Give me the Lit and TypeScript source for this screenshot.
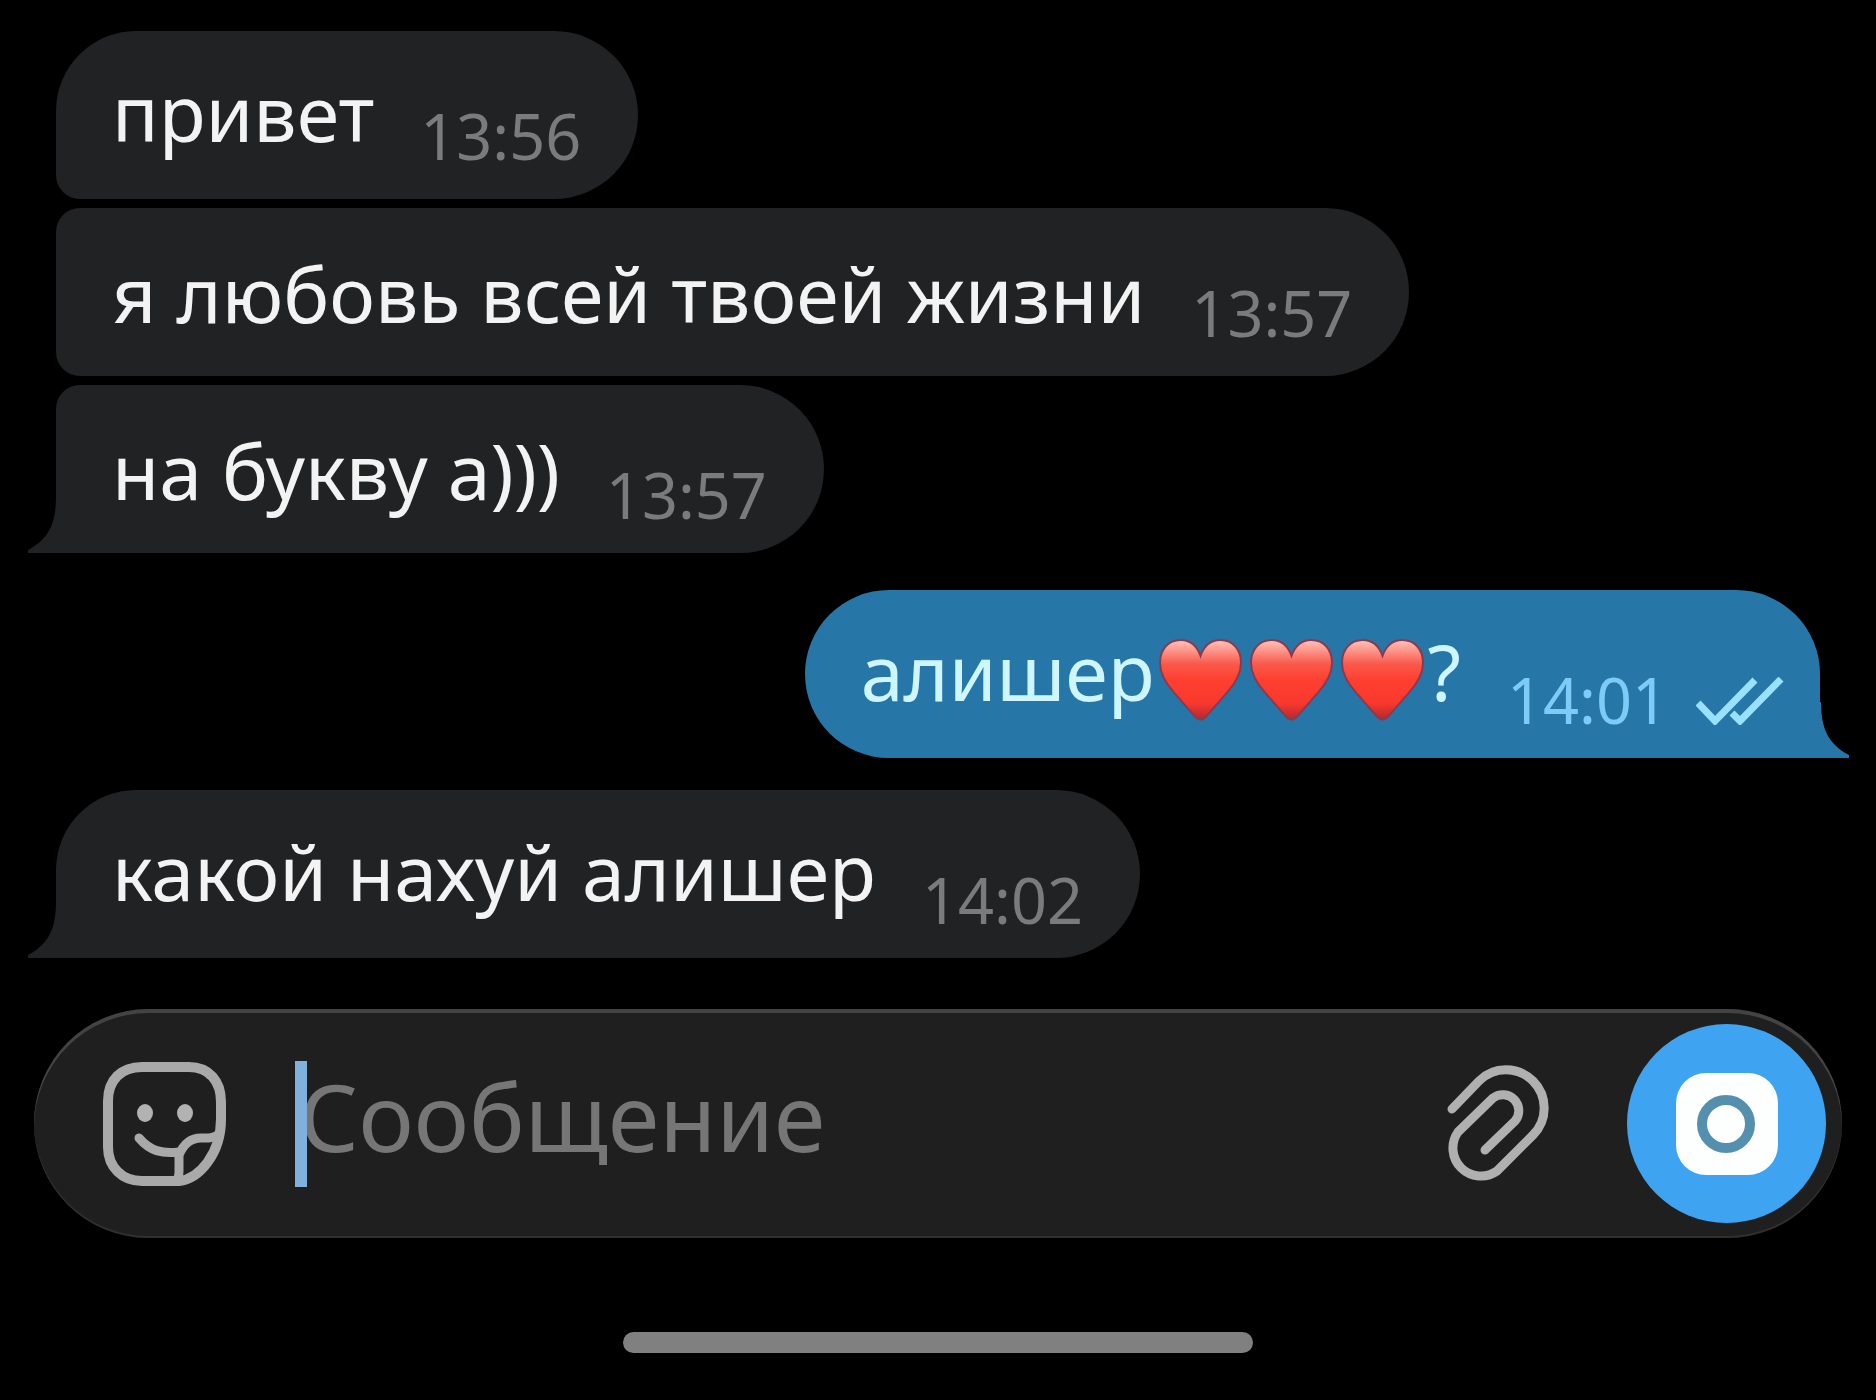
import { LitElement, html, css, nothing } from "lit";
import { customElement, property } from "lit/decorators.js";
import { classMap } from "lit/directives/class-map.js";

interface Message {
  text: string;
  hearts?: number;
  after?: string;
  time: string;
  own?: boolean;
  grouped?: boolean;
  tail?: boolean;
}

const MESSAGES: Message[] = [
  { text: "привет", time: "13:56" },
  { text: "я любовь всей твоей жизни", time: "13:57", grouped: true },
  { text: "на букву а)))", time: "13:57", grouped: true, tail: true },
  { text: "алишер", hearts: 3, after: "?", time: "14:01", own: true, tail: true },
  { text: "какой нахуй алишер", time: "14:02", tail: true },
];

const heart = (id: string) => html`
  <svg class="heart" viewBox="0 0 84 84" role="img" aria-label="❤️">
    <defs>
      <linearGradient id=${id} x1="0" y1="0" x2="0" y2="1">
        <stop offset="0" stop-color="#ffc4ba" />
        <stop offset="0.12" stop-color="#ff9a8e" />
        <stop offset="0.3" stop-color="#f9594b" />
        <stop offset="0.5" stop-color="#ff4030" />
        <stop offset="0.8" stop-color="#f8382c" />
        <stop offset="1" stop-color="#b02a30" />
      </linearGradient>
    </defs>
    <path
      d="M42 17C38 6 31 1 22 1C9 1 1 11 1 24C1 36 7 45 15 54L36 78Q42 85 48 78L69 54C77 45 83 36 83 24C83 11 75 1 62 1C53 1 46 6 42 17Z"
      fill=${`url(#${id})`}
      stroke="#8c3950"
      stroke-width="2"
    />
  </svg>
`;

@customElement("chat-message")
class ChatMessage extends LitElement {
  @property({ attribute: false }) message!: Message;

  static styles = css`
    :host {
      display: flex;
    }
    .bubble {
      position: relative;
      display: flex;
      gap: 46px;
      box-sizing: border-box;
      min-height: 168px;
      padding: 32px 57px 13px 56px;
      border-radius: 80px 84px 84px 24px;
      background: #212223;
      color: #f3f3f3;
    }
    .grouped {
      padding-top: 36px;
      border-top-left-radius: 24px;
    }
    .tailed {
      padding-bottom: 8px;
      border-bottom-left-radius: 0;
    }
    .own {
      margin-left: auto;
      padding-right: 36px;
      border-radius: 84px 84px 0 84px;
      background: #2676a8;
      color: #cdf6ff;
    }
    .text {
      display: flex;
      align-items: flex-start;
      margin: 0;
      font-size: 77px;
      line-height: 100px;
    }
    .meta {
      display: flex;
      align-items: flex-end;
      align-self: flex-end;
      gap: 28px;
      color: #7a7b7c;
      font-size: 63px;
      line-height: 100px;
    }
    .own .meta {
      color: #7fcbf7;
    }
    .heart {
      flex: none;
      width: 83px;
      height: 83px;
      margin: 17px 4px 0;
    }
    .checks {
      width: 88px;
      height: 48px;
      margin-bottom: 25px;
    }
    .tail {
      position: absolute;
      bottom: 0;
      left: -28px;
      width: 30px;
      height: 56px;
    }
    .own .tail {
      left: auto;
      right: -29px;
      transform: scaleX(-1);
    }
  `;

  render() {
    const m = this.message;
    const classes = { bubble: true, own: !!m.own, grouped: !!m.grouped, tailed: !!m.tail };
    return html`
      <div class=${classMap(classes)}>
        <p class="text">
          <span>${m.text}</span>
          ${Array.from({ length: m.hearts ?? 0 }, (_, i) => heart(`heart-${i}`))}
          ${m.after ? html`<span>${m.after}</span>` : nothing}
        </p>
        <div class="meta">
          <time>${m.time}</time>
          ${m.own
            ? html`<svg class="checks" viewBox="0 0 88 48" role="img" aria-label="Прочитано">
                <g fill="none" stroke="#98e1ff" stroke-width="7">
                  <path d="M2 26L19 44L59 3" />
                  <path d="M36 36L44 44L85 2" />
                </g>
              </svg>`
            : nothing}
        </div>
        ${m.tail
          ? html`<svg class="tail" viewBox="0 0 30 56" aria-hidden="true">
              <path
                d="M30 0H28C28 26 21 42 0 53V56H30Z"
                fill=${m.own ? "#2676a8" : "#212223"}
              />
            </svg>`
          : nothing}
      </div>
    `;
  }
}

@customElement("message-composer")
class MessageComposer extends LitElement {
  static styles = css`
    :host {
      display: block;
    }
    .bar {
      display: flex;
      align-items: center;
      box-sizing: border-box;
      min-height: 229px;
      padding: 0 16px 0 68px;
      border-radius: 115px;
      background: #1f1f1f;
      box-shadow: inset 0 4px 0 #434343, inset 0 -2px 0 #303030;
    }
    button {
      display: flex;
      align-items: center;
      justify-content: center;
      flex: none;
      padding: 0;
      border: 0;
      background: none;
      cursor: pointer;
    }
    svg {
      overflow: visible;
    }
    .sticker svg {
      width: 125px;
      height: 126px;
    }
    .clip svg {
      width: 104px;
      height: 120px;
    }
    .camera {
      width: 199px;
      height: 199px;
      margin-left: 78px;
      border-radius: 50%;
      background: #3ea3f0;
    }
    .camera svg {
      width: 104px;
      height: 104px;
    }
    .field {
      display: flex;
      align-items: center;
      flex: 1;
      min-width: 0;
      margin-left: 68px;
    }
    .caret {
      z-index: 1;
      flex: none;
      width: 12px;
      height: 126px;
      background: #7fb1dc;
    }
    input {
      flex: 1;
      min-width: 0;
      height: 126px;
      box-sizing: border-box;
      margin: 0 0 0 -8px;
      padding: 0 0 16px;
      border: 0;
      outline: 0;
      background: none;
      color: #f3f3f3;
      caret-color: transparent;
      font-family: inherit;
      font-size: 93px;
    }
    input::placeholder {
      color: #767676;
      opacity: 1;
    }
  `;

  render() {
    return html`
      <form class="bar">
        <button class="sticker" type="button" aria-label="Стикеры">
          <svg viewBox="0 0 125 126" fill="none" stroke="#a9a9a9" stroke-linecap="round">
            <path
              d="M77 120H40C20 120 6 106 6 86V40C6 19 19 6 40 6H87C107 6 119 20 119 41V58C119 93 97 118 77 120Z"
              stroke-width="10"
              stroke-linejoin="round"
            />
            <path d="M74 119Q77 117 77 110V94Q84 77 99 77H107Q115 76 118 71" stroke-width="9" />
            <path d="M37 77C48 90 60 93 77 91" stroke-width="9" />
            <ellipse cx="43" cy="52" rx="8" ry="9" fill="#b2b2b2" stroke="none" />
            <ellipse cx="83" cy="52" rx="8" ry="9" fill="#b2b2b2" stroke="none" />
          </svg>
        </button>
        <div class="field">
          <span class="caret"></span>
          <input type="text" placeholder="Сообщение" aria-label="Сообщение" />
        </div>
        <button class="clip" type="button" aria-label="Прикрепить">
          <svg viewBox="0 0 104 120" fill="none" stroke="#b0b0b0" stroke-width="9" stroke-linecap="round">
            <path
              d="M7 45L34 17A38 38 0 0 1 88 71L52 107A28 28 0 0 1 13 68L48 34A16 16 0 0 1 70 57L40 86"
            />
          </svg>
        </button>
        <button class="camera" type="button" aria-label="Видеосообщение">
          <svg viewBox="0 0 104 104">
            <rect x="1" y="1" width="102" height="102" rx="30" fill="#fdffff" />
            <circle cx="51" cy="52" r="24" fill="none" stroke="#558fae" stroke-width="10" />
          </svg>
        </button>
      </form>
    `;
  }
}

@customElement("app-root")
class AppRoot extends LitElement {
  static styles = css`
    :host {
      display: flex;
      flex-direction: column;
      box-sizing: border-box;
      min-height: 100vh;
      padding-top: 31px;
      background: #000;
      font-family: "Noto Sans", sans-serif;
    }
    .messages {
      display: flex;
      flex-direction: column;
      gap: 32px;
      padding: 0 56px;
    }
    .group {
      display: flex;
      flex-direction: column;
      gap: 9px;
    }
    .reply {
      padding-top: 5px;
    }
    .composer {
      margin: 51px 34px 0;
    }
    .home {
      width: 630px;
      max-width: 60%;
      height: 21px;
      margin: 94px auto 0;
      border-radius: 11px;
      background: #808080;
    }
  `;

  render() {
    const groups: Message[][] = [];
    for (const m of MESSAGES) {
      if (m.grouped) groups[groups.length - 1].push(m);
      else groups.push([m]);
    }
    return html`
      <main class="messages">
        ${groups.map(
          (group) => html`<section class=${classMap({ group: true, reply: !!group[0].own })}>
            ${group.map((m) => html`<chat-message .message=${m}></chat-message>`)}
          </section>`
        )}
      </main>
      <message-composer class="composer"></message-composer>
      <div class="home"></div>
    `;
  }
}
